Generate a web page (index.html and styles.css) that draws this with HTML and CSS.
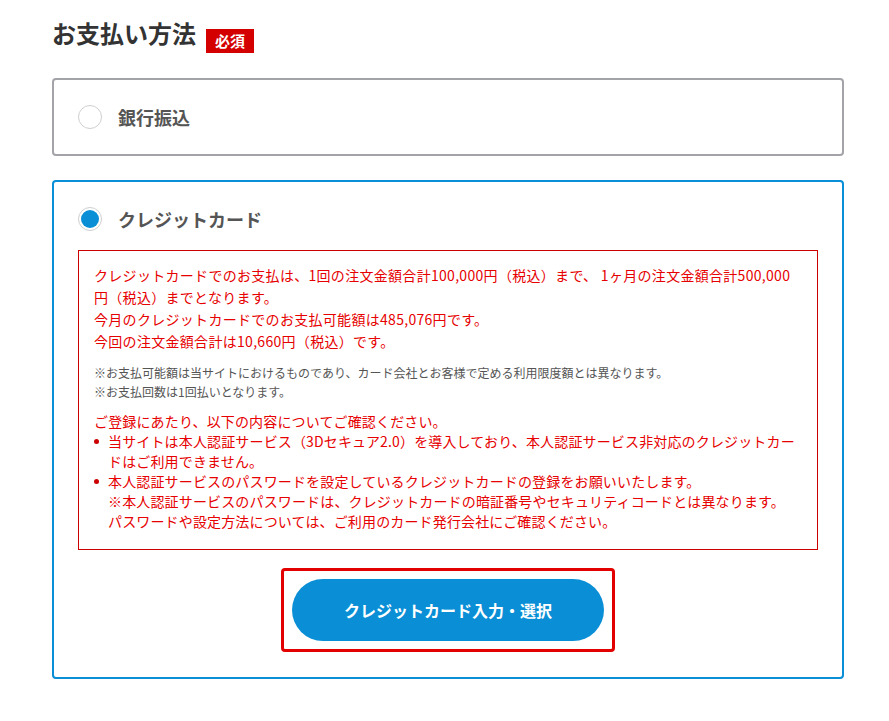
FILE: index.html
```html
<!DOCTYPE html>
<html lang="ja">
<head>
<meta charset="utf-8">
<title>お支払い方法</title>
<link rel="stylesheet" href="styles.css">
</head>
<body>
<div class="wrap">
  <div class="heading">
    <h2 class="title">お支払い方法</h2>
    <span class="badge">必須</span>
  </div>

  <div class="card">
    <div class="option">
      <span class="radio"></span>
      <span class="label">銀行振込</span>
    </div>
  </div>

  <div class="card card-active">
    <div class="option">
      <span class="radio radio-on"></span>
      <span class="label">クレジットカード</span>
    </div>

    <div class="notice">
      <p class="lead">クレジットカードでのお支払は、1回の注文金額合計100,000円（税込）まで、 1ヶ月の注文金額合計500,000円（税込）までとなります。<br>今月のクレジットカードでのお支払可能額は485,076円です。<br>今回の注文金額合計は10,660円（税込）です。</p>
      <p class="small">※お支払可能額は当サイトにおけるものであり、カード会社とお客様で定める利用限度額とは異なります。<br>※お支払回数は1回払いとなります。</p>
      <p class="confirm">ご登録にあたり、以下の内容についてご確認ください。</p>
      <ul class="bullets">
        <li>当サイトは本人認証サービス（3Dセキュア2.0）を導入しており、本人認証サービス非対応のクレジットカー<br>ドはご利用できません。</li>
        <li>本人認証サービスのパスワードを設定しているクレジットカードの登録をお願いいたします。<br>※本人認証サービスのパスワードは、クレジットカードの暗証番号やセキュリティコードとは異なります。<br>パスワードや設定方法については、ご利用のカード発行会社にご確認ください。</li>
      </ul>
    </div>

    <div class="btn-row">
      <div class="btn-frame">
        <button class="btn" type="button">クレジットカード入力・選択</button>
      </div>
    </div>
  </div>
</div>
</body>
</html>
```

FILE: styles.css
```css
* { box-sizing: border-box; }

html, body {
  margin: 0;
  padding: 0;
  background: #fff;
}

body {
  font-family: "Noto Sans CJK JP", "Noto Sans", sans-serif;
  color: #333;
}

.wrap {
  width: 792px;
  margin-left: 52px;
  padding-top: 17px;
}

.heading {
  display: flex;
  align-items: flex-start;
  margin-bottom: 25px;
}

.title {
  margin: 0;
  font-size: 24px;
  line-height: 32px;
  font-weight: 700;
  color: #333;
}

.badge {
  margin-top: 12px;
  margin-left: 10px;
  height: 24px;
  width: 48px;
  background: #d40000;
  color: #fff;
  font-size: 15px;
  font-weight: 700;
  line-height: 24px;
  text-align: center;
}

.card {
  border: 2px solid #a2a4a8;
  border-radius: 4px;
  padding: 24px 24px;
  margin-bottom: 24px;
}

.card-active {
  border-color: #0a8fd6;
  padding-bottom: 25px;
}

.option {
  display: flex;
  align-items: center;
  height: 26px;
}

.radio {
  width: 24px;
  height: 24px;
  border: 1px solid #cfcfcf;
  border-radius: 50%;
  background: #fff;
  display: flex;
  align-items: center;
  justify-content: center;
  flex: none;
}

.radio-on::after {
  content: "";
  width: 18px;
  height: 18px;
  border-radius: 50%;
  background: #0a8fd6;
}

.label {
  margin-left: 16px;
  font-size: 18px;
  font-weight: 700;
  color: #555;
  line-height: 26px;
}

.notice {
  margin-top: 18px;
  border: 1px solid #cc0000;
  padding: 13px 15px 18px 15px;
  color: #e60000;
  font-size: 14px;
}

.notice p {
  margin: 0;
}

.lead {
  line-height: 22px;
  letter-spacing: 0.3px;
}

.small {
  margin-top: 11px !important;
  font-size: 12px;
  line-height: 19px;
  color: #555;
}

.confirm {
  margin-top: 10px !important;
  line-height: 20px;
  letter-spacing: 0.15px;
}

.bullets {
  list-style: none;
  margin: 0;
  padding: 0 0 0 14px;
  line-height: 20px;
  letter-spacing: 0.15px;
}

.bullets li::before {
  content: "";
  display: inline-block;
  width: 5px;
  height: 5px;
  border-radius: 50%;
  background: #cc0000;
  margin-left: -14px;
  margin-right: 9px;
  vertical-align: 3px;
}

.btn-row {
  display: flex;
  justify-content: center;
  margin-top: 18px;
}

.btn-frame {
  border: 3px solid #e20000;
  border-radius: 4px;
  padding: 8px 8px;
}

.btn {
  display: block;
  width: 312px;
  height: 62px;
  border: none;
  border-radius: 31px;
  background: #0a8fd6;
  color: #fff;
  font-family: "Noto Sans CJK JP", "Noto Sans", sans-serif;
  font-size: 16px;
  font-weight: 700;
  cursor: pointer;
}
```
